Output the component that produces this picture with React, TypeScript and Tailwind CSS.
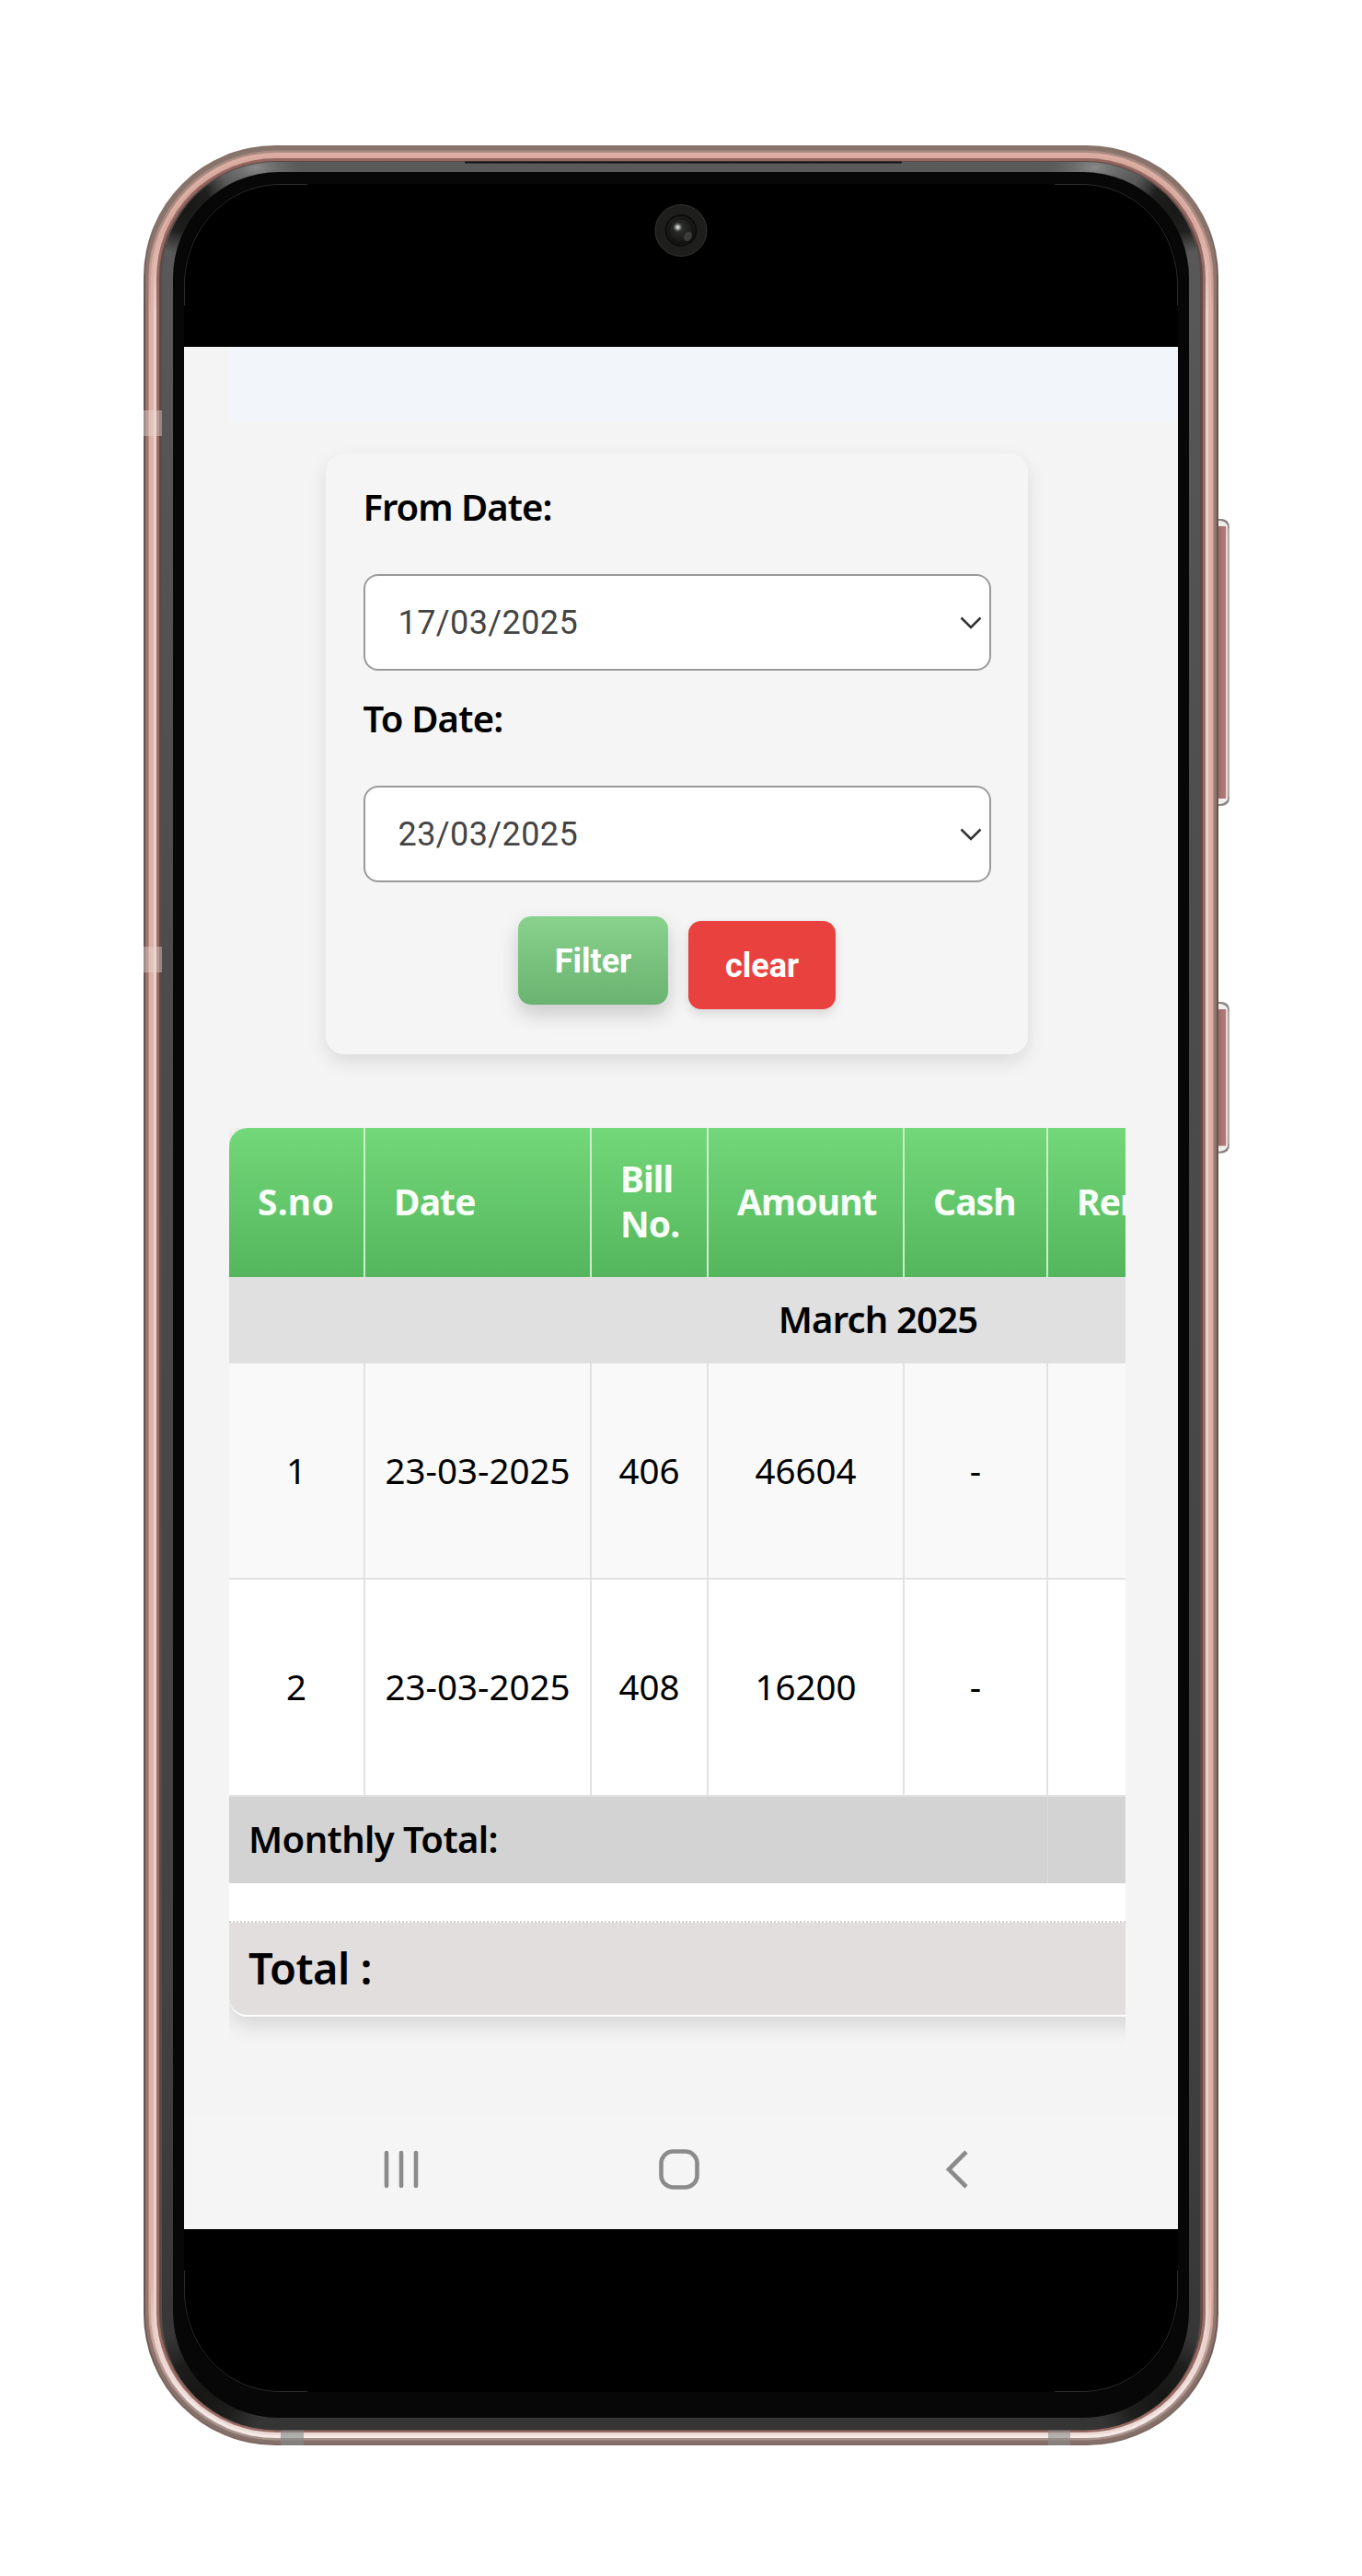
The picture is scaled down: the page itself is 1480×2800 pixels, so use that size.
import React from "react";

/* Concentric rings of the metal frame: [inset, radius, fill] */
const rings: [number, number, string][] = [
  [0, 143, "url(#edge)"],
  [2, 141, "url(#outer)"],
  [5.5, 138, "url(#rose)"],
  [8, 136, "url(#rose2)"],
  [11, 133, "url(#shine)"],
  [14, 130, "url(#inner)"],
  [17, 127, "#5d4a46"],
];

function Grad({ id, top, side, bottom }: { id: string; top: string; side: string; bottom: string }) {
  return (
    <linearGradient id={id} x1="0" y1="0" x2="0" y2="1">
      <stop offset="0" stopColor={top} />
      <stop offset="0.03" stopColor={top} />
      <stop offset="0.07" stopColor={side} />
      <stop offset="0.93" stopColor={side} />
      <stop offset="0.985" stopColor={bottom} />
      <stop offset="1" stopColor={bottom} />
    </linearGradient>
  );
}

function PhoneBody() {
  return (
    <svg className="pointer-events-none absolute inset-0" width="1480" height="2800" viewBox="0 0 1480 2800">
      <defs>
        <Grad id="edge" top="#867269" side="#66524e" bottom="#7d6862" />
        <Grad id="outer" top="#89746c" side="#94766f" bottom="#86706a" />
        <Grad id="rose" top="#a98a80" side="#dcaea2" bottom="#a8928c" />
        <Grad id="rose2" top="#dcaea4" side="#e0b4a8" bottom="#f5e9e7" />
        <Grad id="shine" top="#d8a99f" side="#ead3ce" bottom="#eddad6" />
        <Grad id="inner" top="#936660" side="#9a6e65" bottom="#966a62" />
        <linearGradient id="band" x1="0" y1="0" x2="0" y2="1">
          <stop offset="0" stopColor="#5a5a5a" />
          <stop offset="0.35" stopColor="#4c4c4c" />
          <stop offset="0.8" stopColor="#424242" />
          <stop offset="1" stopColor="#343434" />
        </linearGradient>
        <radialGradient id="dark">
          <stop offset="0" stopColor="#161715" />
          <stop offset="0.55" stopColor="#1c1d1b" stopOpacity="0.95" />
          <stop offset="1" stopColor="#222" stopOpacity="0" />
        </radialGradient>
        <radialGradient id="light">
          <stop offset="0" stopColor="#8a8a8a" />
          <stop offset="1" stopColor="#6a6a6a" stopOpacity="0" />
        </radialGradient>
        <linearGradient id="key" x1="0" y1="0" x2="1" y2="0">
          <stop offset="0" stopColor="#8f7a76" />
          <stop offset="0.12" stopColor="#a06f6b" />
          <stop offset="0.6" stopColor="#b47b79" />
          <stop offset="0.66" stopColor="#a87370" />
          <stop offset="0.68" stopColor="#e8d8d7" />
          <stop offset="0.8" stopColor="#e4d5d4" />
          <stop offset="0.84" stopColor="#b3acaa" />
          <stop offset="1" stopColor="#b3acaa" />
        </linearGradient>
        <radialGradient id="lens" cx="0.45" cy="0.42">
          <stop offset="0" stopColor="#303230" />
          <stop offset="1" stopColor="#151514" />
        </radialGradient>
        <radialGradient id="glint">
          <stop offset="0" stopColor="#dff0e4" />
          <stop offset="0.35" stopColor="#a8aca9" />
          <stop offset="1" stopColor="#555" stopOpacity="0" />
        </radialGradient>
        <clipPath id="bandClip">
          <rect x="176" y="176" width="1128" height="2465.5" rx="124" />
        </clipPath>
      </defs>

      {/* Volume and power keys */}
      {[[564, 312], [1089, 164.5]].map(([y, h]) => (
        <g key={y}>
          <path d={`M1320 ${y}h8q8 1 8 9v${h - 18}q0 8 -8 9h-8z`} fill="#8d8683" />
          <path d={`M1320 ${y + 2}h6q8 1 9 9v${h - 22}q-1 8 -9 9h-6z`} fill="#f1efee" />
          <path d={`M1324 ${y + 8}h8q4 1 4 4v${h - 24}q0 3 -4 4h-8z`} fill="url(#key)" />
        </g>
      ))}

      {rings.map(([i, r, fill]) => (
        <rect key={i} x={156 + i} y={158 + i} width={1168 - 2 * i} height={2500 - 2 * i} rx={r} fill={fill} />
      ))}

      {/* Antenna breaks */}
      <rect x="156" y="446" width="20" height="28" fill="#ead8d4" opacity="0.42" />
      <rect x="156" y="1029" width="20" height="28" fill="#ead8d4" opacity="0.42" />
      <rect x="305" y="2641" width="25" height="17" fill="#848a89" opacity="0.62" />
      <rect x="1139" y="2641" width="24" height="17" fill="#8c8c89" opacity="0.62" />

      {/* Glass edge */}
      <rect x="176" y="176" width="1128" height="2465.5" rx="124" fill="url(#band)" />
      <g clipPath="url(#bandClip)">
        <ellipse cx="278" cy="182" rx="50" ry="26" fill="url(#light)" />
        <ellipse cx="1190" cy="182" rx="52" ry="26" fill="url(#light)" />
        <circle cx="198" cy="222" r="54" fill="url(#dark)" />
        <circle cx="1282" cy="222" r="54" fill="url(#dark)" />
        <circle cx="215" cy="2606" r="72" fill="url(#dark)" />
        <circle cx="1265" cy="2606" r="72" fill="url(#dark)" />
      </g>
      <rect x="505" y="175.5" width="475" height="2" rx="1" fill="#141414" />
      <rect x="188" y="187" width="1104" height="2441" rx="115" fill="#070707" />

      {/* Display */}
      <rect x="200" y="200" width="1080" height="2400" rx="104" fill="#000" />
      <g fill="none" stroke="#3e3e3e" strokeWidth="0.7">
        <path d="M200.5 332V310C200.5 250 245 200.5 305 200.5H334" />
        <path d="M1279.5 332V310C1279.5 250 1235 200.5 1175 200.5H1146" />
        <path d="M200.5 2468V2490C200.5 2550 245 2599.5 305 2599.5H334" />
        <path d="M1279.5 2468V2490C1279.5 2550 1235 2599.5 1175 2599.5H1146" />
      </g>

      {/* Front camera */}
      <circle cx="740" cy="250.5" r="28" fill="#1e1e1c" stroke="#3c3c3a" strokeWidth="0.8" />
      <circle cx="740" cy="250.5" r="16.5" fill="url(#lens)" stroke="#0c0c0b" strokeWidth="1.8" />
      <circle cx="740" cy="250.5" r="13" fill="none" stroke="#101010" strokeWidth="1" />
      <circle cx="736.5" cy="247" r="5.5" fill="url(#glint)" />
      <ellipse cx="747.5" cy="257" rx="4" ry="5.5" fill="#4a4c4a" opacity="0.7" transform="rotate(30 747.5 257)" />
    </svg>
  );
}

function DateField({ label, value, labelClass }: { label: string; value: string; labelClass: string }) {
  return (
    <div>
      <div className={`h-[131px] pt-[33px] text-[40px] leading-[50px] font-semibold text-black ${labelClass}`}>{label}</div>
      <div className="flex h-[105px] items-center justify-between rounded-[16px] border-2 border-[#9a9a9a] bg-white pr-[8px] pl-[36px]">
        <span className="font-[Roboto] text-[36px] tracking-[0.4px] text-[#444]">{value}</span>
        <svg width="24" height="16" viewBox="0 0 24 16" fill="none" stroke="#333" strokeWidth="2.6">
          <path d="M1.5 2.5L12 13L22.5 2.5" />
        </svg>
      </div>
    </div>
  );
}

const rows = [
  { no: "1", date: "23-03-2025", bill: "406", amount: "46604", cash: "-" },
  { no: "2", date: "23-03-2025", bill: "408", amount: "16200", cash: "-" },
];

const th = "border-r-2 border-[#c9efcb] px-[31px] pt-0 pb-[4px] text-left font-bold";
const td = "border-r-2 border-b-2 border-[#e2e2e2] p-0 pb-px text-center";

function BillTable() {
  return (
    <div className="ml-[49px] h-[1040px] w-[974px] overflow-hidden">
      <table className="w-[1410px] table-fixed border-separate border-spacing-0 rounded-[20px] bg-white text-[38.5px] leading-[49px] text-black shadow-[0_8px_24px_rgba(0,0,0,0.14)]">
        <colgroup>
          <col className="w-[148px]" />
          <col className="w-[246px]" />
          <col className="w-[127px]" />
          <col className="w-[213px]" />
          <col className="w-[156px]" />
          <col />
        </colgroup>
        <thead>
          <tr className="h-[162px] bg-linear-to-b from-[#73d87a] to-[#54b65c] text-[39px] tracking-[-0.9px] text-[#f8fff8]">
            <th className={`${th} rounded-tl-[20px] tracking-[0.2px]`}>S.no</th>
            <th className={th}>Date</th>
            <th className={th}>Bill No.</th>
            <th className={th}>Amount</th>
            <th className={th}>Cash</th>
            <th className="px-[31px] pt-0 pb-[4px] text-left font-bold">Remarks</th>
          </tr>
        </thead>
        <tbody>
          <tr className="h-[94px] bg-[#e0e0e0]">
            <td colSpan={6} className="p-0 pb-[4px] text-center text-[40px] font-semibold tracking-[-0.8px]">March 2025</td>
          </tr>
          {rows.map((r, i) => (
            <tr key={r.no} className={i % 2 ? "h-[236px] bg-white" : "h-[235px] bg-[#f9f9f9]"}>
              <td className={td}>{r.no}</td>
              <td className={td}>{r.date}</td>
              <td className={td}>{r.bill}</td>
              <td className={td}>{r.amount}</td>
              <td className={td}>{r.cash}</td>
              <td className="border-b-2 border-[#e2e2e2]" />
            </tr>
          ))}
          <tr className="h-[94px] bg-[#d3d3d3]">
            <td colSpan={5} className="border-r border-[#dcdcdc] p-0 pb-[4px] pl-[21px] text-[40px] font-semibold tracking-[-0.6px]">Monthly Total:</td>
            <td />
          </tr>
          <tr className="h-[43px] bg-white">
            <td colSpan={6} className="border-b-2 border-dotted border-[#cfcfcf] p-0" />
          </tr>
          <tr className="h-[102px]">
            <td colSpan={6} className="rounded-b-[20px] border-b-2 border-white bg-[#e2dedd] p-0 pb-[2px] pl-[21px] text-[47px] font-semibold tracking-[-0.5px]">Total :</td>
          </tr>
        </tbody>
      </table>
    </div>
  );
}

function NavBar() {
  return (
    <div className="flex h-[124px] items-center bg-[#f5f5f5] pb-[7px] pl-[216px] text-[#8b8b8b]">
      <svg width="40" height="44" viewBox="0 0 40 44" stroke="currentColor" strokeWidth="4.6" strokeLinecap="round">
        <path d="M4 4V40M20 4V40M36 4V40" />
      </svg>
      <svg className="ml-[260px]" width="44" height="44" viewBox="0 0 44 44" fill="none" stroke="currentColor" strokeWidth="4.6">
        <rect x="2.5" y="2.5" width="39" height="39" rx="13" />
      </svg>
      <svg className="ml-[266px]" width="28" height="44" viewBox="0 0 28 44" fill="none" stroke="currentColor" strokeWidth="4.6">
        <path d="M24 3L5 22L24 41" />
      </svg>
    </div>
  );
}

export default function App() {
  return (
    <div className="relative h-[2800px] w-[1480px] overflow-hidden bg-white pt-[377px] pl-[200px] font-['Noto_Sans',sans-serif]">
      <PhoneBody />
      <main className="relative flex h-[2046px] w-[1080px] flex-col overflow-hidden bg-[#f4f4f4]">
        <div className="ml-[48px] h-[82px] shrink-0 bg-[#f2f6fa]" />
        <section className="mt-[34px] ml-[154px] h-[653px] w-[763px] shrink-0 rounded-[20px] bg-[#f5f5f5] px-[40.5px] shadow-[0_8px_20px_rgba(0,0,0,0.1)]">
          <DateField label="From Date:" value="17/03/2025" labelClass="tracking-[-1px]" />
          <div className="-mt-[6px]">
            <DateField label="To Date:" value="23/03/2025" labelClass="tracking-[-0.8px]" />
          </div>
          <div className="mt-[37px] flex justify-center gap-[22px] font-[Roboto] text-[36px] font-bold text-white">
            <button className="h-[96px] w-[163px] rounded-[14px] bg-linear-to-b from-[#88d28d] to-[#6bb370] pt-[2px] shadow-[0_10px_22px_rgba(0,0,0,0.18)]">Filter</button>
            <button className="mt-[5px] h-[96px] w-[160px] rounded-[14px] bg-[#e9423e] pt-[2px] shadow-[0_5px_12px_rgba(0,0,0,0.12)]">clear</button>
          </div>
        </section>
        <div className="mt-[80px] grow">
          <BillTable />
        </div>
        <NavBar />
      </main>
    </div>
  );
}
